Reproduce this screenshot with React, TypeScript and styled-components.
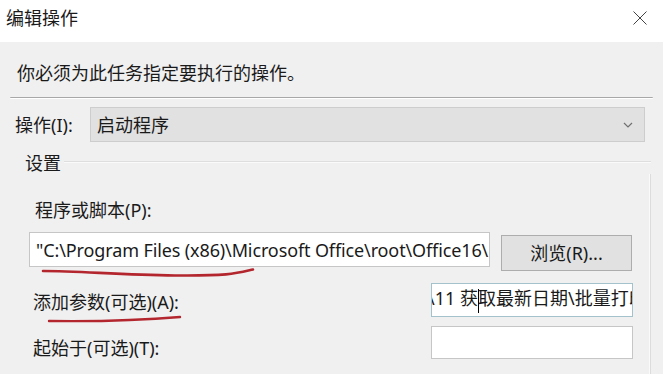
import { createGlobalStyle, styled } from 'styled-components';

const GlobalStyle = createGlobalStyle`
  html, body {
    margin: 0;
    padding: 0;
    background: #f0f0f0;
  }
  body {
    font-family: "Noto Sans", "Noto Sans CJK SC", sans-serif;
    font-size: 18px;
    line-height: 22px;
    color: #1a1a1a;
  }
`;

export default function App() {
  return (
    <Window>
      <GlobalStyle />
      <TitleBar>
        <Title>编辑操作</Title>
        <CloseButton aria-label="关闭">
          <svg width="16" height="16" viewBox="0 0 16 16">
            <path d="M1.5 1.5 L14.5 14.5 M14.5 1.5 L1.5 14.5" stroke="#444" strokeWidth="1" fill="none" />
          </svg>
        </CloseButton>
      </TitleBar>

      <Body>
        <Instruction>你必须为此任务指定要执行的操作。</Instruction>
        <Separator />

        <ActionRow>
          <FieldLabel>操作(I):</FieldLabel>
          <Combo>
            <span>启动程序</span>
            <svg width="10" height="6" viewBox="0 0 10 6">
              <path d="M1 1 L5 5 L9 1" stroke="#707070" strokeWidth="1.2" fill="none" />
            </svg>
          </Combo>
        </ActionRow>

        <Group>
          <GroupHeader>
            <GroupTitle>设置</GroupTitle>
            <GroupLine />
          </GroupHeader>
          <GroupBody>
            <ProgramLabel>程序或脚本(P):</ProgramLabel>
            <ProgramRow>
              <TextBox $width={461} $height={35}>
                <Value $spacing={-0.12}>
                  "C:\Program Files (x86)\Microsoft Office\root\Office16\EXCEL.EXE"
                </Value>
              </TextBox>
              <BrowseButton>浏览(R)...</BrowseButton>
            </ProgramRow>

            <OptionRow $top={12}>
              <OptionLabel $offset={8}>添加参数(可选)(A):</OptionLabel>
              <TextBox $width={202} $height={34} $focused $scrolled>
                <Value $shift={-4}>
                  \11 获<Caret />取最新日期\批量打印.xlsm
                </Value>
              </TextBox>
            </OptionRow>

            <OptionRow $top={9}>
              <OptionLabel $offset={11}>起始于(可选)(T):</OptionLabel>
              <TextBox $width={202} $height={33} />
            </OptionRow>
          </GroupBody>
        </Group>
      </Body>

      <Marks width="663" height="374" viewBox="0 0 663 374">
        <path
          d="M43 271 C 80 271, 120 275, 175 275.5 S 236 273.5, 253 269.5"
          stroke="#b3262e"
          strokeWidth="2.6"
          fill="none"
          strokeLinecap="round"
        />
        <path
          d="M49 321 C 90 321.5, 140 320.5, 180 317"
          stroke="#b3262e"
          strokeWidth="2.4"
          fill="none"
          strokeLinecap="round"
        />
      </Marks>
    </Window>
  );
}

const Window = styled.div`
  position: relative;
  width: 663px;
  height: 374px;
  overflow: hidden;
  background: #f0f0f0;
`;

const TitleBar = styled.div`
  display: flex;
  align-items: center;
  justify-content: space-between;
  height: 42px;
  padding: 0 15px 6px 6px;
  box-sizing: border-box;
  background: #ffffff;
`;

const Title = styled.div`
  color: #1a1a1a;
`;

const CloseButton = styled.div`
  display: flex;
  width: 16px;
  height: 16px;
`;

const Body = styled.div`
  display: flex;
  flex-direction: column;
`;

const Instruction = styled.div`
  margin: 20px 0 0 17px;
`;

const Separator = styled.div`
  margin: 13px 10px 0 10px;
  border-top: 1px solid #a8a8a8;
  border-bottom: 1px solid #ffffff;
  border-radius: 1px;
`;

const ActionRow = styled.div`
  display: flex;
  align-items: center;
  margin: 8px 18px 0 15px;
  gap: 5px;
`;

const FieldLabel = styled.div`
  width: 70px;
  white-space: nowrap;
`;

const Combo = styled.div`
  flex: 1;
  display: flex;
  align-items: center;
  justify-content: space-between;
  height: 35px;
  box-sizing: border-box;
  padding: 0 11px 0 6px;
  background: #e1e1e1;
  border: 1px solid #cdcdcd;
`;

const Group = styled.div`
  margin: 10px 12px 0 20px;
  display: flex;
  flex-direction: column;
`;

const GroupHeader = styled.div`
  display: flex;
  align-items: center;
  height: 22px;
  padding-left: 5px;
`;

const GroupTitle = styled.div`
  padding-right: 3px;
`;

const GroupLine = styled.div`
  flex: 1;
  border-top: 1px solid #dedede;
  border-bottom: 1px solid #fafafa;
  margin-top: -2px;
`;

const GroupBody = styled.div`
  display: flex;
  flex-direction: column;
  border-right: 1px solid #dcdcdc;
  box-shadow: inset -1px 0 0 #fafafa;
  padding: 25px 17px 40px 9px;
`;

const ProgramLabel = styled.div`
  margin-left: 6px;
`;

const ProgramRow = styled.div`
  display: flex;
  align-items: flex-start;
  gap: 11px;
  margin-top: 11px;
`;

const TextBox = styled.div<{ $width: number; $height: number; $focused?: boolean; $scrolled?: boolean }>`
  flex: none;
  width: ${({ $width }) => $width}px;
  height: ${({ $height }) => $height}px;
  box-sizing: border-box;
  display: flex;
  align-items: center;
  padding-left: ${({ $scrolled }) => ($scrolled ? 0 : 6)}px;
  background: #ffffff;
  border: 1px solid ${({ $focused }) => ($focused ? '#a4c2cc' : '#c6c6c6')};
  overflow: hidden;
`;

const Value = styled.span<{ $spacing?: number; $shift?: number }>`
  flex: none;
  white-space: nowrap;
  letter-spacing: ${({ $spacing }) => $spacing ?? 0}px;
  margin-left: ${({ $shift }) => $shift ?? 0}px;
`;

const Caret = styled.span`
  display: inline-block;
  width: 0;
  height: 24px;
  border-left: 1px solid #000000;
  vertical-align: middle;
  margin-right: -1px;
`;

const BrowseButton = styled.div`
  display: flex;
  align-items: center;
  justify-content: center;
  width: 131px;
  height: 36px;
  margin-top: 3px;
  box-sizing: border-box;
  background: #e1e1e1;
  border: 1px solid #adadad;
`;

const OptionRow = styled.div<{ $top: number }>`
  display: flex;
  align-items: flex-start;
  justify-content: space-between;
  margin-top: ${({ $top }) => $top}px;
`;

const OptionLabel = styled.div<{ $offset: number }>`
  margin: ${({ $offset }) => $offset}px 0 0 4px;
`;

const Marks = styled.svg`
  position: absolute;
  top: 0;
  left: 0;
  pointer-events: none;
`;
